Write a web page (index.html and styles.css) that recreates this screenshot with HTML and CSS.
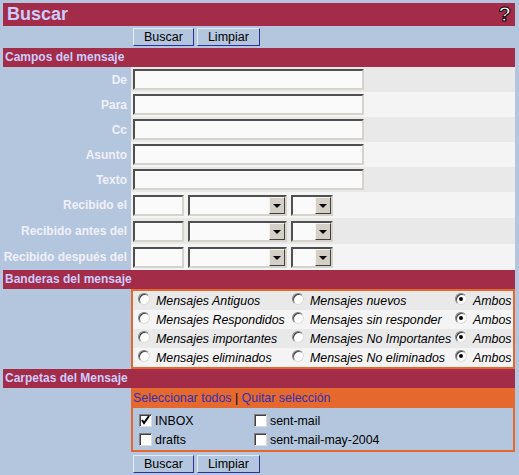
FILE: index.html
```html
<!DOCTYPE html>
<html lang="es">
<head>
<meta charset="utf-8">
<title>Buscar</title>
<link rel="stylesheet" href="styles.css">
</head>
<body>
<div class="page">
  <div class="titlebar">
    <span class="title">Buscar</span>
    <span class="help">?</span>
  </div>

  <div class="btnrow">
    <button class="btn">Buscar</button>
    <button class="btn">Limpiar</button>
  </div>

  <div class="sechead">Campos del mensaje</div>

  <div class="fields">
    <div class="label">De</div>
    <div class="cell odd"><span class="text wide"></span></div>
    <div class="label">Para</div>
    <div class="cell even"><span class="text wide"></span></div>
    <div class="label">Cc</div>
    <div class="cell odd"><span class="text wide"></span></div>
    <div class="label">Asunto</div>
    <div class="cell even"><span class="text wide"></span></div>
    <div class="label">Texto</div>
    <div class="cell odd"><span class="text wide"></span></div>

    <div class="label">Recibido el</div>
    <div class="cell even">
      <span class="text day"></span>
      <span class="select month"><span class="arrow"></span></span>
      <span class="select year"><span class="arrow"></span></span>
    </div>
    <div class="label">Recibido antes del</div>
    <div class="cell odd">
      <span class="text day"></span>
      <span class="select month"><span class="arrow"></span></span>
      <span class="select year"><span class="arrow"></span></span>
    </div>
    <div class="label">Recibido después del</div>
    <div class="cell even">
      <span class="text day"></span>
      <span class="select month"><span class="arrow"></span></span>
      <span class="select year"><span class="arrow"></span></span>
    </div>
  </div>

  <div class="sechead">Banderas del mensaje</div>

  <div class="indent">
    <div class="flags">
      <div class="frow odd">
        <span class="opt c1"><span class="radio"></span>Mensajes Antiguos</span>
        <span class="opt c2"><span class="radio"></span>Mensajes nuevos</span>
        <span class="opt c3"><span class="radio on"></span>Ambos</span>
      </div>
      <div class="frow even">
        <span class="opt c1"><span class="radio"></span>Mensajes Respondidos</span>
        <span class="opt c2"><span class="radio"></span>Mensajes sin responder</span>
        <span class="opt c3"><span class="radio on"></span>Ambos</span>
      </div>
      <div class="frow odd">
        <span class="opt c1"><span class="radio"></span>Mensajes importantes</span>
        <span class="opt c2"><span class="radio"></span>Mensajes No Importantes</span>
        <span class="opt c3"><span class="radio on"></span>Ambos</span>
      </div>
      <div class="frow even">
        <span class="opt c1"><span class="radio"></span>Mensajes eliminados</span>
        <span class="opt c2"><span class="radio"></span>Mensajes No eliminados</span>
        <span class="opt c3"><span class="radio on"></span>Ambos</span>
      </div>
    </div>
  </div>

  <div class="sechead">Carpetas del Mensaje</div>

  <div class="indent">
    <div class="folders">
      <div class="links"><a href="#">Seleccionar todos</a> | <a href="#">Quitar selección</a></div>
      <div class="boxes">
        <span class="chk"><span class="box"><svg width="11" height="11" viewBox="0 0 11 11"><path d="M2 5 L4 8 L9 1" fill="none" stroke="#000" stroke-width="2"/></svg></span>INBOX</span>
        <span class="chk"><span class="box"></span>sent-mail</span>
        <span class="chk"><span class="box"></span>drafts</span>
        <span class="chk"><span class="box"></span>sent-mail-may-2004</span>
      </div>
    </div>
  </div>

  <div class="btnrow bottom">
    <button class="btn">Buscar</button>
    <button class="btn">Limpiar</button>
  </div>
</div>
</body>
</html>
```

FILE: styles.css
```css
html, body {
  margin: 0;
  padding: 0;
  background: #b4c6de;
  font-family: "Liberation Sans", Arial, sans-serif;
  font-size: 12px;
}

.page {
  width: 512px;
  margin: 3px 0 0 3px;
}

.titlebar {
  height: 23px;
  background: #a32c48;
  display: flex;
  align-items: center;
  justify-content: space-between;
  padding: 0 4px 0 4px;
}

.title {
  font-weight: bold;
  font-size: 18px;
  color: #ccccff;
  line-height: 23px;
}

.help {
  font-weight: bold;
  font-size: 21px;
  line-height: 20px;
  color: #ffffff;
  -webkit-text-stroke: 1px #000;
  margin-top: -1px;
}

.btnrow {
  height: 22px;
  display: flex;
  align-items: center;
  gap: 3px;
  padding-left: 130px;
}

.btnrow.bottom {
  height: 21px;
  align-items: flex-end;
}

.btn {
  height: 18px;
  padding: 0 10px;
  margin: 0;
  font-family: "Liberation Sans", Arial, sans-serif;
  font-size: 12.5px;
  color: #000;
  background: #b4c6de;
  border: 1px solid;
  border-color: #e4ecf8 #2f2f9a #2f2f9a #e4ecf8;
  line-height: 16px;
}

.sechead {
  height: 19px;
  line-height: 19px;
  background: #a32c48;
  color: #ccccff;
  font-weight: bold;
  font-size: 12px;
  padding-left: 2px;
}

.fields {
  display: grid;
  grid-template-columns: 128px 1fr;
  grid-template-rows: repeat(5, 25px) repeat(3, 26px);
}

.label {
  color: #f0f0fa;
  font-weight: bold;
  padding-right: 4px;
  display: flex;
  align-items: center;
  justify-content: flex-end;
  white-space: nowrap;
}

.cell {
  display: flex;
  align-items: center;
  padding-left: 2px;
  gap: 4px;
}

.odd { background: #e9e9e9; }
.even { background: #f4f4f4; }

.text {
  display: block;
  box-sizing: border-box;
  height: 21px;
  background: #fafafa;
  border: 2px solid;
  border-color: #505050 #d6d3cc #d6d3cc #505050;
}

.text.wide { width: 231px; }
.text.day { width: 51px; }

.select {
  display: flex;
  justify-content: flex-end;
  box-sizing: border-box;
  height: 21px;
  background: #fafafa;
  border: 2px solid;
  border-color: #505050 #d6d3cc #d6d3cc #505050;
}

.select.month { width: 99px; }
.select.year { width: 42px; }

.arrow {
  width: 16px;
  height: 17px;
  box-sizing: border-box;
  background: #d4d0c8;
  border: 1px solid;
  border-color: #f4f2ee #404040 #404040 #f4f2ee;
  display: flex;
  align-items: center;
  justify-content: center;
}

.arrow::after {
  content: "";
  border-left: 4px solid transparent;
  border-right: 4px solid transparent;
  border-top: 4px solid #000;
  margin-top: 1px;
}

.indent {
  padding-left: 128px;
}

.flags {
  border: 2px solid #e5682e;
  overflow: hidden;
}

.frow {
  height: 19px;
  display: grid;
  grid-template-columns: 156px 163px 1fr;
  white-space: nowrap;
  font-style: italic;
  font-size: 12.4px;
  color: #000;
}

.opt {
  display: flex;
  align-items: center;
  overflow: hidden;
}

.c1 { padding-left: 5px; }
.c2 { padding-left: 3px; }
.c3 { padding-left: 3px; }

.radio {
  flex: none;
  width: 12px;
  height: 12px;
  border-radius: 50%;
  background: #fff;
  box-sizing: border-box;
  border: 1px solid;
  border-color: #808080 #e0ddd6 #e0ddd6 #808080;
  box-shadow: inset 1px 1px 0 #404040;
  margin: -4px 6px 0 0;
  display: flex;
  align-items: center;
  justify-content: center;
}

.radio.on::after {
  content: "";
  width: 4px;
  height: 4px;
  border-radius: 50%;
  background: #000;
}

.folders {
  background: #e5682e;
  padding: 0 2px 2px 2px;
}

.links {
  height: 20px;
  line-height: 20px;
  font-size: 12.4px;
  color: #000;
}

.links a {
  color: #3232b4;
  text-decoration: none;
}

.boxes {
  background: #b4c6de;
  height: 42px;
  box-sizing: border-box;
  padding: 3px 0 0 6px;
  display: grid;
  grid-template-columns: 115px 1fr;
  grid-auto-rows: 19px;
}

.chk {
  display: flex;
  align-items: center;
  color: #000;
  font-size: 12.4px;
}

.box {
  flex: none;
  width: 13px;
  height: 13px;
  box-sizing: border-box;
  background: #fff;
  border: 1px solid;
  border-color: #808080 #e0ddd6 #e0ddd6 #808080;
  box-shadow: inset 1px 1px 0 #404040;
  margin-right: 3px;
  display: flex;
  align-items: center;
  justify-content: center;
}

.box svg { display: block; }
```
